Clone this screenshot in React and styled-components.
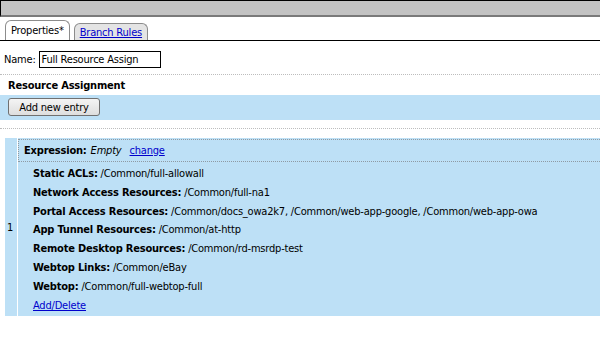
import React from "react";
import styled, { createGlobalStyle } from "styled-components";

const GlobalStyle = createGlobalStyle`
  body {
    margin: 0;
    background: #fff;
    font-family: "DejaVu Sans Condensed", "DejaVu Sans", sans-serif;
    font-size: 11px;
    letter-spacing: -0.2px;
    color: #000;
  }
`;

const BLUE = "#bde0f6";

const Page = styled.div`
  width: 600px;
  height: 347px;
  overflow: hidden;
`;

const TopBar = styled.div`
  height: 14px;
  background: #c3c3c3;
  border-top: 1px solid #000;
  border-left: 1px solid #000;
  border-bottom: 2px solid #7a7a7a;
`;

const TabStrip = styled.div`
  display: flex;
  align-items: flex-end;
  gap: 4px;
  margin-top: 3px;
  padding-left: 5px;
  border-bottom: 1px solid #000;
`;

const Tab = styled.div`
  display: flex;
  align-items: center;
  height: ${(p) => (p.active ? "19px" : "16px")};
  padding: 0 5px;
  border: 1px solid #8c8c8c;
  border-bottom: none;
  border-radius: 6px 6px 0 0;
  background: ${(p) => (p.active ? "#fff" : "#e4e4e4")};
  color: ${(p) => (p.active ? "#000" : "#0000cc")};
  text-decoration: ${(p) => (p.active ? "none" : "underline")};
`;

const NameRow = styled.div`
  display: flex;
  align-items: center;
  gap: 3px;
  padding: 10px 4px 6px;
`;

const NameInput = styled.div`
  width: 116px;
  height: 15px;
  padding: 0 2px;
  border: 1px solid #000;
  line-height: 15px;
`;

const Divider = styled.div`
  border-top: 1px dotted #bdbdbd;
`;

const SectionTitle = styled.div`
  padding: 4px 8px 3px;
  font-weight: bold;
`;

const ActionBand = styled.div`
  background: ${BLUE};
  padding: 3px 8px 4px;
`;

const Button = styled.button`
  display: block;
  font: inherit;
  letter-spacing: inherit;
  height: 18px;
  width: 92px;
  padding: 0;
  border: 1px solid #707070;
  border-radius: 3px;
  background: linear-gradient(#f4f4f4, #dedede);
  color: #000;
`;

const Spacer = styled.div`
  height: ${(p) => p.h}px;
`;

const Entry = styled.div`
  display: flex;
  margin-left: 5px;
  height: 178px;
  gap: 1px;
`;

const IndexCell = styled.div`
  width: 12px;
  background: ${BLUE};
  display: flex;
  align-items: center;
  padding-left: 2px;
  box-sizing: border-box;
`;

const Content = styled.div`
  flex: 1;
  background: ${BLUE};
  padding-top: 1px;
`;

const ExpressionRow = styled.div`
  height: 21px;
  display: flex;
  align-items: center;
  gap: 4px;
  padding-left: 5px;
  border-top: 1px dotted #8f9aa3;
  border-bottom: 1px dotted #8f9aa3;
  border-left: 1px dotted #8f9aa3;
`;

const List = styled.div`
  padding: 3px 0 0 15px;
`;

const Line = styled.div`
  height: 18.8px;
  line-height: 18.8px;
  white-space: nowrap;
`;

const Label = styled.b``;

const Link = styled.a`
  color: #0000cc;
  text-decoration: underline;
  margin-left: ${(p) => p.ml || 0}px;
`;

const resources = [
  ["Static ACLs", "/Common/full-allowall"],
  ["Network Access Resources", "/Common/full-na1"],
  [
    "Portal Access Resources",
    "/Common/docs_owa2k7, /Common/web-app-google, /Common/web-app-owa",
  ],
  ["App Tunnel Resources", "/Common/at-http"],
  ["Remote Desktop Resources", "/Common/rd-msrdp-test"],
  ["Webtop Links", "/Common/eBay"],
  ["Webtop", "/Common/full-webtop-full"],
];

const App = () => {
  return (
    <Page>
      <GlobalStyle />
      <TopBar />
      <TabStrip>
        <Tab active>Properties*</Tab>
        <Tab>Branch Rules</Tab>
      </TabStrip>
      <NameRow>
        <span>Name:</span>
        <NameInput>Full Resource Assign</NameInput>
      </NameRow>
      <Divider />
      <SectionTitle>Resource Assignment</SectionTitle>
      <ActionBand>
        <Button>Add new entry</Button>
      </ActionBand>
      <Spacer h={8} />
      <Divider />
      <Spacer h={9} />
      <Entry>
        <IndexCell>1</IndexCell>
        <Content>
          <ExpressionRow>
            <Label>Expression:</Label>
            <i>Empty</i>
            <Link ml={4}>change</Link>
          </ExpressionRow>
          <List>
            {resources.map(([label, value]) => (
              <Line key={label}>
                <Label>{label}:</Label> {value}
              </Line>
            ))}
            <Line>
              <Link>Add/Delete</Link>
            </Line>
          </List>
        </Content>
      </Entry>
    </Page>
  );
};

export default App;
